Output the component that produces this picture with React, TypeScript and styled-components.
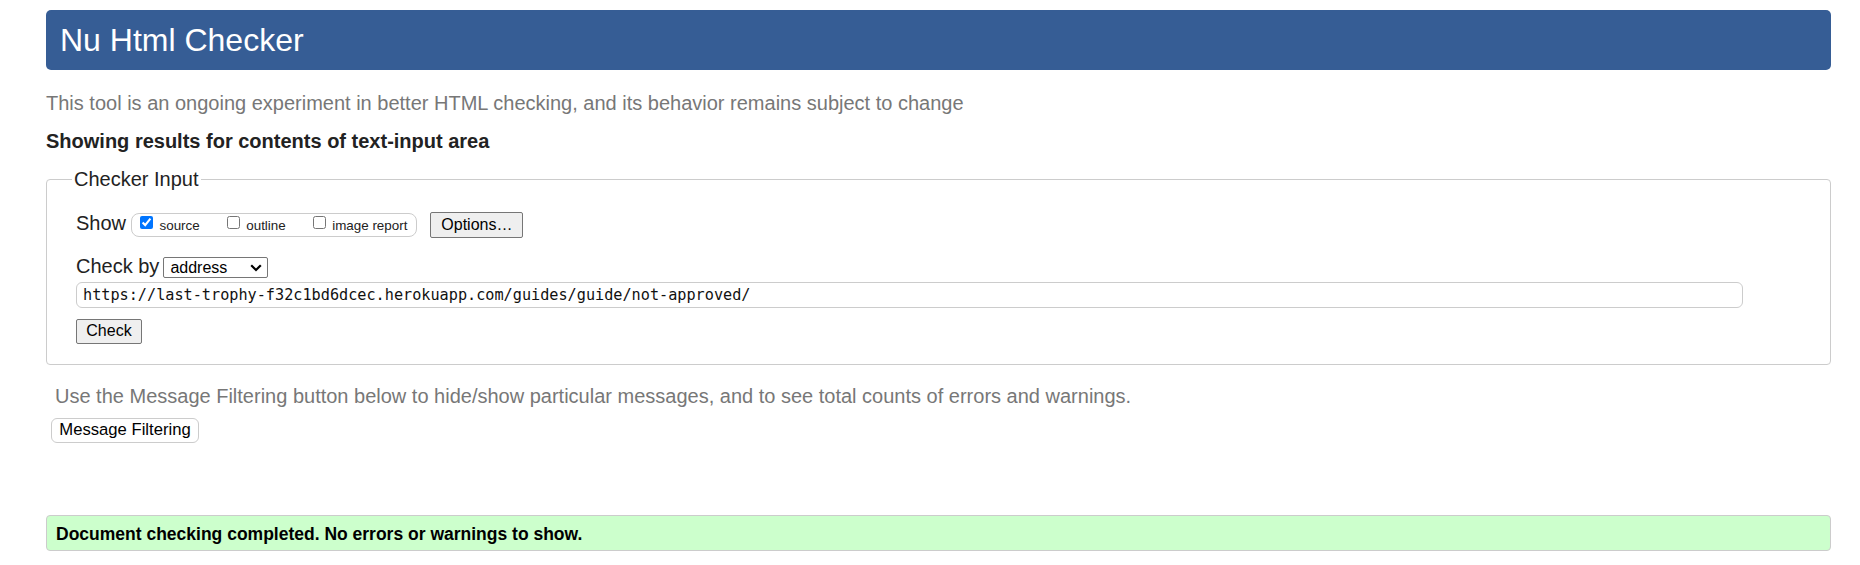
import React from "react";
import styled, { createGlobalStyle } from "styled-components";

const GlobalStyle = createGlobalStyle`
  html, body {
    margin: 0;
    padding: 0;
    background: #ffffff;
  }
  body {
    font-family: "Liberation Sans", Arial, sans-serif;
    color: #222222;
  }
  * { box-sizing: border-box; }
`;

const Page = styled.div`
  padding: 10px 29px 0 46px;
  display: flex;
  flex-direction: column;
  align-items: stretch;
`;

const Header = styled.h1`
  margin: 0;
  background: #365d95;
  color: #ffffff;
  font-size: 32px;
  font-weight: normal;
  line-height: 36px;
  padding: 12px 14px;
  border-radius: 5px;
`;

const Note = styled.p<{ $top: number; $indent?: number }>`
  margin: ${(p) => p.$top}px 0 0;
  padding-left: ${(p) => p.$indent ?? 0}px;
  color: #777777;
  font-size: 20px;
  line-height: 23px;
`;

const ResultsHeading = styled.h2`
  margin: 15px 0 0;
  font-size: 20px;
  font-weight: bold;
  line-height: 23px;
  color: #222222;
`;

const Fieldset = styled.fieldset`
  margin: 15px 0 0;
  padding: 21px 0 20px 29px;
  border: 1px solid #cccccc;
  border-radius: 4px;
  min-width: 0;
`;

const Legend = styled.legend`
  padding: 0 2px;
  margin-left: -4px;
  font-size: 20px;
  line-height: 23px;
  color: #222222;
`;

const Row = styled.div<{ $align: "flex-start" | "baseline"; $top?: number }>`
  display: flex;
  align-items: ${(p) => p.$align};
  margin-top: ${(p) => p.$top ?? 0}px;
`;

const FieldLabel = styled.span`
  font-size: 20px;
  line-height: 23px;
  color: #222222;
`;

const OptionGroup = styled.div`
  display: flex;
  align-items: center;
  gap: 27px;
  height: 24px;
  margin: 1px 0 0 5px;
  padding: 0 9px 0 8px;
  border: 1px solid #cccccc;
  border-radius: 8px;
`;

const OptionItem = styled.label`
  display: flex;
  align-items: center;
  font-size: 13.4px;
  line-height: 15px;
  color: #222222;
`;

const Checkbox = styled.input`
  width: 13px;
  height: 13px;
  margin: 0 6.5px 5px 0;
`;

const Button = styled.button<{ $w: number; $h: number; $left?: number; $top?: number; $size: number; $soft?: boolean }>`
  width: ${(p) => p.$w}px;
  height: ${(p) => p.$h}px;
  margin: ${(p) => p.$top ?? 0}px 0 0 ${(p) => p.$left ?? 0}px;
  padding: 0;
  font-family: "Liberation Sans", Arial, sans-serif;
  font-size: ${(p) => p.$size}px;
  color: #000000;
  background: ${(p) => (p.$soft ? "#ffffff" : "#efefef")};
  border: 1px solid ${(p) => (p.$soft ? "#cccccc" : "#767676")};
  border-radius: ${(p) => (p.$soft ? 6 : 2)}px;
  display: flex;
  align-items: center;
  justify-content: center;
  flex: none;
`;

const SelectWrap = styled.div`
  position: relative;
  margin-left: 4px;
  display: inline-flex;
`;

const Select = styled.select`
  appearance: none;
  -webkit-appearance: none;
  width: 105px;
  height: 21px;
  padding: 0 0 0 6px;
  font-family: "Liberation Sans", Arial, sans-serif;
  font-size: 16px;
  color: #000000;
  background: #ffffff;
  border: 1px solid #767676;
  border-radius: 2px;
`;

const Chevron = styled.svg`
  position: absolute;
  right: 6px;
  top: 7px;
  pointer-events: none;
`;

const UrlInput = styled.input`
  display: block;
  width: calc(100% - 87px);
  height: 26px;
  margin-top: 4px;
  padding: 0 6px;
  font-family: "DejaVu Sans Mono", "Liberation Mono", monospace;
  font-size: 15.2px;
  color: #111111;
  background: #ffffff;
  border: 1px solid #cccccc;
  border-radius: 6px;
  outline: none;
`;

const FilterButtonRow = styled.div`
  display: flex;
`;

const SuccessBox = styled.div`
  margin-top: 72px;
  padding: 8px 9px 6px;
  background: #ccffcc;
  border: 1px solid #cccccc;
  border-radius: 4px;
  font-size: 17.5px;
  font-weight: bold;
  line-height: 20px;
  color: #000000;
`;

export default function App() {
  return (
    <>
      <GlobalStyle />
      <Page>
        <Header>Nu Html Checker</Header>
        <Note $top={22}>
          This tool is an ongoing experiment in better HTML checking, and its behavior remains subject to change
        </Note>
        <ResultsHeading>Showing results for contents of text-input area</ResultsHeading>
        <Fieldset>
          <Legend>Checker Input</Legend>
          <Row $align="flex-start">
            <FieldLabel>Show</FieldLabel>
            <OptionGroup>
              <OptionItem>
                <Checkbox type="checkbox" defaultChecked />
                source
              </OptionItem>
              <OptionItem>
                <Checkbox type="checkbox" />
                outline
              </OptionItem>
              <OptionItem>
                <Checkbox type="checkbox" />
                image report
              </OptionItem>
            </OptionGroup>
            <Button type="button" $w={93} $h={26} $left={13} $size={16}>
              Options…
            </Button>
          </Row>
          <Row $align="baseline" $top={16.5}>
            <FieldLabel>Check by</FieldLabel>
            <SelectWrap>
              <Select defaultValue="address">
                <option value="address">address</option>
                <option value="file">file upload</option>
                <option value="textarea">text input</option>
              </Select>
              <Chevron width="12" height="8" viewBox="0 0 12 8">
                <polyline points="1.2,1.2 6,6 10.8,1.2" fill="none" stroke="#000" strokeWidth="2.2" />
              </Chevron>
            </SelectWrap>
          </Row>
          <UrlInput
            type="text"
            defaultValue="https://last-trophy-f32c1bd6dcec.herokuapp.com/guides/guide/not-approved/"
          />
          <Button type="button" $w={66} $h={25} $top={11} $size={16}>
            Check
          </Button>
        </Fieldset>
        <Note $top={20} $indent={9}>
          Use the Message Filtering button below to hide/show particular messages, and to see total counts of errors and warnings.
        </Note>
        <FilterButtonRow>
          <Button type="button" $w={148} $h={25} $left={5} $top={10} $size={16.67} $soft>
            Message Filtering
          </Button>
        </FilterButtonRow>
        <SuccessBox>Document checking completed. No errors or warnings to show.</SuccessBox>
      </Page>
    </>
  );
}
